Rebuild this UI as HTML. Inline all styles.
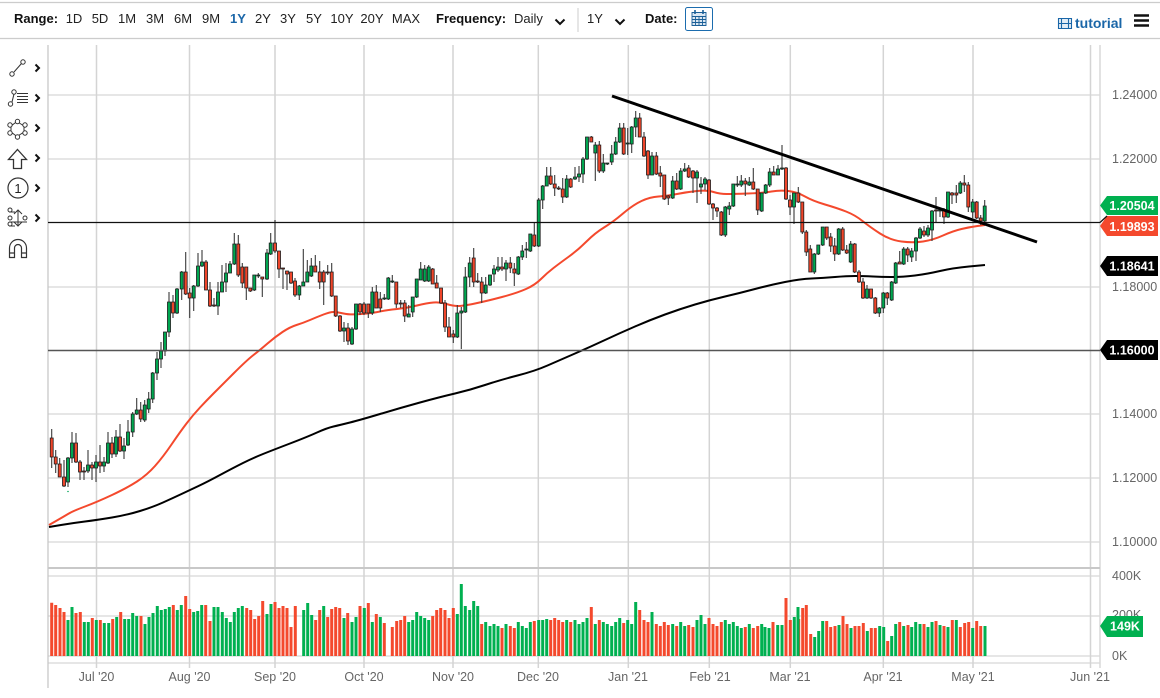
<!DOCTYPE html>
<html lang="en"><head><meta charset="utf-8"><title>Chart</title>
<style>
html,body{margin:0;padding:0;background:#fff}
svg{display:block;filter:blur(.3px)}
text{font-family:"Liberation Sans",sans-serif}
.t{font-size:13px;fill:#222;text-anchor:middle}
.b{font-size:13px;font-weight:bold;fill:#111}
.ax{font-size:12.5px;fill:#666}
.xl{font-size:12.5px;fill:#666;text-anchor:middle}
.lb{font-size:12.5px;font-weight:bold;fill:#fff;text-anchor:middle}
</style></head><body>
<svg width="1160" height="698" viewBox="0 0 1160 698" xmlns="http://www.w3.org/2000/svg">
<!-- toolbar -->
<path d="M0 2.5H1160M0 38.5H1160" stroke="#ccc" stroke-width="1.2" fill="none"/>
<text x="14" y="23" class="b">Range:</text>
<text x="74" y="23" class="t">1D</text><text x="100" y="23" class="t">5D</text><text x="127" y="23" class="t">1M</text><text x="155" y="23" class="t">3M</text><text x="183" y="23" class="t">6M</text><text x="211" y="23" class="t">9M</text>
<text x="238" y="23" class="t" style="font-weight:bold;fill:#1a66a8">1Y</text>
<text x="263" y="23" class="t">2Y</text><text x="288" y="23" class="t">3Y</text><text x="314" y="23" class="t">5Y</text><text x="342" y="23" class="t">10Y</text><text x="372" y="23" class="t">20Y</text><text x="406" y="23" class="t">MAX</text>
<text x="436" y="23" class="b">Frequency:</text>
<text x="514" y="23" style="font-size:13px;fill:#222">Daily</text>
<path d="M555.5 19.5l4.5 4.5 4.5-4.5M615.5 19.5l4.5 4.5 4.5-4.5" stroke="#111" stroke-width="2" fill="none"/>
<path d="M578 8V32" stroke="#ccc"/>
<text x="595" y="23" class="t">1Y</text>
<text x="645" y="23" class="b">Date:</text>
<rect x="685.5" y="7.5" width="27" height="23" rx="2" fill="#fff" stroke="#1b6cae"/>
<path d="M692 12.5h14v13h-14zM692 16.5h14M695.5 16.5v9M699 16.5v9M702.5 16.5v9M692 19.5h14M692 22.5h14" fill="#dbe7f2" stroke="#1b5f97" stroke-width=".9"/>
<path d="M695 10v4M703 10v4" stroke="#1b5f97" stroke-width="1.6"/>
<path d="M1058.5 18.5h13v10h-13zM1061.5 18.5v10M1068.5 18.5v10M1058.5 23.5h13" fill="#e3edf6" stroke="#1a66a8" stroke-width="1.1"/>
<text x="1075" y="28" style="font-size:14px;font-weight:bold;fill:#1a66a8">tutorial</text>
<path d="M1134 15.5h15M1134 20.5h15M1134 25.5h15" stroke="#111" stroke-width="2.6"/>

<!-- left tools -->
<g fill="none" stroke="#333" stroke-width="1">
<path d="M14 72L21.5 63.5"/><circle cx="12" cy="74" r="2.2"/><circle cx="23" cy="62" r="2.2"/>
<path d="M12 102L14 94"/><circle cx="14" cy="92" r="2.2"/><circle cx="10.5" cy="104" r="2.2"/>
<path d="M17 93.5H28M17 96.5H28M17 99.5H28M17 102.5H28"/>
<path d="M17 121.5L24 126L24 132L17 136.5L11 132L11 126Z"/><circle cx="17.5" cy="121.5" r="2.2" fill="#fff"/><circle cx="25" cy="125" r="2.2" fill="#fff"/><circle cx="25" cy="133" r="2.2" fill="#fff"/><circle cx="17.5" cy="137" r="2.2" fill="#fff"/><circle cx="10" cy="133" r="2.2" fill="#fff"/><circle cx="10" cy="125" r="2.2" fill="#fff"/>
<path d="M17.5 149.5L26.5 159.5H21.5V168.5H13.5V159.5H8.5Z" stroke-width="1.3"/>
<circle cx="18" cy="188" r="10" stroke-width="1.2"/>
<path d="M9 212H15M9 222H27M9 226H15M18 210V226M14 214l4-4 4 4M14 222l4 4 4-4"/><circle cx="10" cy="210" r="2"/><circle cx="10" cy="218" r="2"/><circle cx="10" cy="224" r="2"/><circle cx="25" cy="218" r="2"/>
<path d="M9.5 257.5V248a8.5 8.5 0 0 1 17 0v9.5h-5V248a3.5 3.5 0 0 0-7 0v9.5ZM9.5 253h5M21.5 253h5" stroke-width="1.2"/>
</g>
<text x="18" y="193" style="font-size:13px;fill:#222;text-anchor:middle">1</text>
<path d="M35.5 64.5l3.5 3.5-3.5 3.5M35.5 94.5l3.5 3.5-3.5 3.5M35.5 124.5l3.5 3.5-3.5 3.5M35.5 154.5l3.5 3.5-3.5 3.5M35.5 184.5l3.5 3.5-3.5 3.5M35.5 214.5l3.5 3.5-3.5 3.5" stroke="#111" stroke-width="2" fill="none"/>

<!-- grid -->
<path d="M48 95H1100M48 159H1100M48 287H1100M48 414H1100M48 478H1100M48 542H1100M48 576H1100M48 616H1100M48 656H1100M48 663H1100" stroke="#e6e6e6" stroke-width="2" fill="none"/>
<path d="M96.5 45V668M189.5 45V668M275 45V668M364 45V668M453 45V668M538.3 45V668M628.3 45V668M709.3 45V668M790.3 45V668M883.3 45V668M973 45V668M1090.5 45V668" stroke="#d4d4d4" stroke-width="1.5" fill="none"/>
<path d="M48 45V688" stroke="#c8c8c8" stroke-width="1.3"/>
<path d="M1100 45V668" stroke="#d8d8d8" stroke-width="1.5"/>
<path d="M48 568H1100" stroke="#c8c8c8" stroke-width="2"/>

<!-- MAs -->
<path d="M49 525L56 521Q63 517 68 514Q73 511 85 506.5Q97 502 112 495Q127 488 137 481.5Q147 475 155 466Q163 457 171.5 444.5Q180 432 186.5 423.5Q193 415 200 407.5Q207 400 213.5 393.5Q220 387 233.5 373.5Q247 360 253.5 355Q260 350 267.5 343.5Q275 337 282.5 332Q290 327 296.5 325Q303 323 310 320Q317 317 323.5 314.5Q330 312 333.5 312Q337 312 343.5 313.5Q350 315 361.5 314Q373 313 380 311.5Q387 310 397 309Q407 308 417 305.5Q427 303 433.5 302.5Q440 302 446.5 304Q453 306 458 306Q463 306 475 303.5Q487 301 502 297Q517 293 526 289Q535 285 541 279Q547 273 553.5 268Q560 263 569 256.5Q578 250 586.5 241.5Q595 233 604 227.5Q613 222 623 213.5Q633 205 641.5 201Q650 197 658.5 196.5Q667 196 677 194Q687 192 697 191Q707 190 713.5 192Q720 194 726.5 194Q733 194 748 193.5Q763 193 771.5 191.5Q780 190 788.5 191Q797 192 805 196.5Q813 201 825 204.5Q837 208 846 211.5Q855 215 862.5 221Q870 227 880 233.5Q890 240 901.5 241.5Q913 243 923 241.5Q933 240 943 235.5Q953 231 961.5 229Q970 227 977.5 226L985 225" fill="none" stroke="#f4492d" stroke-width="2" stroke-linejoin="round"/>
<path d="M49 527L61 525Q73 523 85 521.5Q97 520 112 517.5Q127 515 140 511Q153 507 163 502.5Q173 498 181.5 494Q190 490 198.5 486Q207 482 220 475Q233 468 243 463Q253 458 263 454Q273 450 290 443.5Q307 437 317 432.5Q327 428 333.5 426.5Q340 425 350 422.5Q360 420 380 414Q400 408 420 402.5Q440 397 455 393.5Q470 390 485 385Q500 380 517.5 375.5Q535 371 547.5 365.5Q560 360 575 353.5Q590 347 605 340Q620 333 635 326.5Q650 320 665 314.5Q680 309 695 304.5Q710 300 725 296.5Q740 293 755 289Q770 285 785 282Q800 279 811.5 278.5Q823 278 835 277Q847 276 855 276Q863 276 873 276.5Q883 277 893 277Q903 277 915 275.5Q927 274 940 271Q953 268 969 266.5L985 265" fill="none" stroke="#000" stroke-width="2" stroke-linejoin="round"/>

<!-- wicks -->
<path fill="none" stroke="#3a3a3a" stroke-width="1.1" d="M51.7 429V468M55.7 450V473M59.7 458V477M64 460V487M68 457V487M72 432V463M76 433V463M80 460V480M84 467V480M88 450V473M92 462V480M96 455V482M100 445V473M104 457V472M108 432V464M112 437V458M116 430V457M120 424V452M124 438V459M128 420V446M132.7 412V437M136.7 398V415M140.7 402V422M144.7 400V422M148.7 392V413M152.7 372V403M157 352V380M161 342V368M165 332V356M169 292V337M173 295V318M177 288V314M181.7 271V300M185.7 252V295M189.7 288V318M193.7 285V311M198 253V287M202 250V267M206 260V290M210 282V307M214 298V307M218 282V315M222 265V292M226 263V292M230 261V273M234.3 233V265M238.3 235V277M242.3 263V288M246.3 267V300M250.3 288V292M254.3 275V291M258.3 273V278M262.3 277V297M267 249V280M270.7 233V255M275 220V253M279 251V278M283 268V289M287 271V290M291 272V284M295 278V297M299.3 285V300M303.3 249V286M307.3 260V282M311.3 258V277M315.3 255V272M319.7 261V289M323.7 270V305M327.7 265V275M331.7 263V297M335.7 296V317M340 315V332M344 322V342M348 323V345M352 327V345M356 304V330M360 303V315M364 302V315M368.3 304V318M372.3 287V315M376.3 285V308M380.3 292V312M384.3 294V300M388.3 277V300M392.3 275V283M396.3 282V308M400.7 300V308M404.7 300V322M408.7 305V317M412.7 297V317M416.7 279V298M420.7 262V280M424.7 265V282M428.7 265V282M432.7 268V284M436.7 275V288M441 288V304M445 300V332M449 317V337M453.3 330V343M457.3 305V338M461.3 307V349M465.3 267V313M469.7 257V287M473.7 248V287M477.7 273V283M481.7 277V303M485.7 277V294M490 275V286M494 265V282M498 257V272M502 257V271M506 260V281M510.3 257V273M514.3 263V286M518.3 256V275M522.3 245V260M526.3 242V258M530.3 234V252M534.3 222V247M538.7 198V247M542.7 185V209M546.7 167V186M550.7 167V185M554.7 175V196M558.7 186V190M562.7 178V203M566.7 175V198M570.7 178V188M575 167V180M579 166V182M583 157V183M587 137V160M591.3 136V142M595.3 142V181M599.3 141V173M603.3 154V173M607.3 163V165M611.7 145V165M615.7 137V155M619.7 123V143M623.7 123V155M627.7 128V155M631.7 126V153M635.7 111V137M639.7 113V137M644 132V157M648 150V179M652 152V175M656.3 152V175M660.3 166V187M664.3 175V200M668.3 195V205M672.7 176V199M676.7 173V190M680.7 168V190M684.7 163V172M688.7 165V178M693 170V193M697 170V203M701 177V194M705 177V190M709 179V205M713 203V220M717 207V217M721.3 211V236M725.3 206V237M729.3 202V215M733.3 184V207M737.3 176V187M741.3 175V187M745.3 178V196M749.3 177V186M753.3 168V190M757.7 189V215M761.7 193V212M765.7 184V194M769.7 168V187M773.7 166V175M778 165V175M782 145V170M786 167V200M790 195V215M794 193V224M798.3 187V203M802.3 202V234M806.3 230V256M810.3 245V272M814.3 253V274M818.3 245V255M822.7 227V246M826.7 227V240M830.7 233V252M834.7 238V261M838.7 228V255M842.7 227V251M846.7 245V254M850.7 241V263M854.7 243V273M859 270V283M863 278V299M867 285V299M871 289V299M875.3 297V314M879.3 307V317M883.3 292V313M887.3 292V305M891.7 281V301M895.7 262V284M899.7 251V264M903.7 247V265M907.7 247V262M911.7 248V262M916 237V261M920 227V239M924 226V237M928 225V237M932 210V241M936 197V222M940 208V217M944 208V224M948 192V218M952 192V204M956.3 185V203M960.3 181V194M964.3 175V192M968.3 182V212M972.7 199V218M976.7 201V219M980.7 215V225M984.7 200V223"/>
<!-- red bodies -->
<path fill="#ef452a" stroke="#1a1a1a" stroke-width=".8" d="M50.2 438h3v19h-3zM54.2 457h3v7h-3zM58.2 464h3v13h-3zM62.5 477h3v9h-3zM74.5 443h3v19h-3zM78.5 462h3v10h-3zM82.5 471h3v1h-3zM90.5 465h3v3h-3zM98.5 462h3v4h-3zM110.5 443h3v11h-3zM118.5 437h3v14h-3zM139.2 410h3v9h-3zM171.5 302h3v11h-3zM184.2 272h3v22h-3zM188.2 293h3v5h-3zM204.5 262h3v28h-3zM208.5 290h3v16h-3zM212.5 305h3v1h-3zM236.8 244h3v31h-3zM240.8 267h3v16h-3zM244.8 267h3v21h-3zM248.8 288h3v3h-3zM260.8 277h3v2h-3zM273.5 243h3v8h-3zM277.5 251h3v18h-3zM281.5 268h3v1h-3zM285.5 271h3v3h-3zM289.5 272h3v11h-3zM293.5 281h3v14h-3zM313.8 266h3v6h-3zM318.2 272h3v10h-3zM322.2 272h3v10h-3zM326.2 272h3v1h-3zM330.2 272h3v24h-3zM334.2 296h3v20h-3zM338.5 316h3v15h-3zM346.5 328h3v13h-3zM358.5 304h3v8h-3zM362.5 304h3v9h-3zM366.8 304h3v9h-3zM374.8 292h3v16h-3zM378.8 299h3v9h-3zM394.8 282h3v22h-3zM399.2 303h3v1h-3zM403.2 303h3v13h-3zM431.2 269h3v15h-3zM435.2 283h3v5h-3zM439.5 288h3v15h-3zM443.5 303h3v24h-3zM447.5 327h3v10h-3zM451.8 334h3v3h-3zM472.2 258h3v24h-3zM476.2 281h3v1h-3zM480.2 282h3v11h-3zM500.5 267h3v2h-3zM508.8 263h3v5h-3zM512.8 269h3v4h-3zM532.8 235h3v11h-3zM549.2 176h3v8h-3zM553.2 184h3v4h-3zM557.2 188h3v1h-3zM561.2 189h3v8h-3zM569.2 179h3v8h-3zM589.8 137h3v5h-3zM597.8 145h3v26h-3zM622.2 128h3v26h-3zM638.2 118h3v19h-3zM642.5 137h3v19h-3zM646.5 151h3v24h-3zM654.8 156h3v18h-3zM658.8 173h3v3h-3zM662.8 175h3v24h-3zM666.8 196h3v2h-3zM675.2 181h3v8h-3zM687.2 168h3v9h-3zM691.5 171h3v7h-3zM707.5 180h3v24h-3zM711.5 204h3v4h-3zM715.5 208h3v3h-3zM719.8 212h3v23h-3zM743.8 181h3v3h-3zM751.8 182h3v7h-3zM756.2 189h3v21h-3zM772.2 172h3v3h-3zM784.5 168h3v31h-3zM788.5 200h3v7h-3zM796.8 193h3v9h-3zM800.8 202h3v30h-3zM804.8 232h3v20h-3zM808.8 249h3v23h-3zM825.2 227h3v11h-3zM829.2 237h3v9h-3zM833.2 246h3v8h-3zM841.2 229h3v21h-3zM845.2 250h3v3h-3zM853.2 244h3v28h-3zM857.5 272h3v10h-3zM861.5 282h3v16h-3zM869.5 289h3v9h-3zM873.8 298h3v15h-3zM885.8 293h3v5h-3zM898.2 262h3v2h-3zM906.2 249h3v6h-3zM922.5 231h3v4h-3zM934.5 210h3v1h-3zM942.5 210h3v7h-3zM950.5 193h3v2h-3zM954.8 193h3v2h-3zM962.8 183h3v2h-3zM966.8 185h3v22h-3zM975.2 202h3v16h-3zM979.2 218h3v3h-3z"/>
<!-- green bodies -->
<path fill="#00a650" stroke="#1a1a1a" stroke-width=".8" d="M66.5 458h3v24h-3zM70.5 443h3v15h-3zM86.5 465h3v6h-3zM94.5 462h3v6h-3zM102.5 462h3v4h-3zM106.5 443h3v20h-3zM114.5 437h3v17h-3zM122.5 446h3v5h-3zM126.5 432h3v13h-3zM131.2 414h3v18h-3zM135.2 410h3v4h-3zM143.2 405h3v15h-3zM147.2 399h3v10h-3zM151.2 373h3v26h-3zM155.5 359h3v14h-3zM159.5 351h3v8h-3zM163.5 332h3v19h-3zM167.5 302h3v30h-3zM175.5 289h3v24h-3zM180.2 272h3v17h-3zM192.2 286h3v12h-3zM196.5 266h3v20h-3zM200.5 262h3v4h-3zM216.5 292h3v14h-3zM220.5 282h3v10h-3zM224.5 273h3v9h-3zM228.5 264h3v9h-3zM232.8 244h3v20h-3zM252.8 275h3v15h-3zM256.8 275h3v1h-3zM265.5 253h3v26h-3zM269.2 243h3v11h-3zM297.8 286h3v9h-3zM301.8 282h3v4h-3zM305.8 272h3v10h-3zM309.8 266h3v10h-3zM342.5 328h3v3h-3zM350.5 329h3v15h-3zM354.5 304h3v25h-3zM370.8 292h3v21h-3zM382.8 298h3v1h-3zM386.8 278h3v21h-3zM390.8 281h3v1h-3zM407.2 314h3v3h-3zM411.2 297h3v15h-3zM415.2 279h3v18h-3zM419.2 269h3v11h-3zM423.2 269h3v12h-3zM427.2 267h3v14h-3zM455.8 313h3v24h-3zM459.8 311h3v2h-3zM463.8 277h3v35h-3zM468.2 263h3v14h-3zM484.2 285h3v8h-3zM488.5 275h3v10h-3zM492.5 269h3v5h-3zM496.5 267h3v3h-3zM504.5 263h3v6h-3zM516.8 257h3v17h-3zM520.8 251h3v6h-3zM524.8 249h3v1h-3zM528.8 234h3v17h-3zM537.2 200h3v46h-3zM541.2 186h3v14h-3zM545.2 176h3v10h-3zM565.2 179h3v18h-3zM573.5 177h3v2h-3zM577.5 174h3v3h-3zM581.5 159h3v15h-3zM585.5 137h3v22h-3zM593.8 145h3v8h-3zM601.8 163h3v8h-3zM605.8 163h3v1h-3zM610.2 154h3v8h-3zM614.2 142h3v12h-3zM618.2 128h3v14h-3zM626.2 143h3v1h-3zM630.2 127h3v17h-3zM634.2 118h3v9h-3zM650.5 156h3v19h-3zM671.2 181h3v17h-3zM679.2 171h3v18h-3zM683.2 169h3v2h-3zM695.5 172h3v6h-3zM699.5 184h3v3h-3zM703.5 179h3v5h-3zM723.8 207h3v28h-3zM727.8 206h3v3h-3zM731.8 184h3v22h-3zM735.8 184h3v1h-3zM739.8 181h3v4h-3zM747.8 182h3v3h-3zM760.2 193h3v18h-3zM764.2 185h3v8h-3zM768.2 172h3v13h-3zM776.5 169h3v6h-3zM780.5 168h3v1h-3zM792.5 193h3v14h-3zM812.8 254h3v18h-3zM816.8 245h3v9h-3zM821.2 227h3v18h-3zM837.2 229h3v25h-3zM849.2 244h3v18h-3zM865.5 289h3v9h-3zM877.8 308h3v5h-3zM881.8 293h3v15h-3zM890.2 282h3v18h-3zM894.2 263h3v20h-3zM902.2 249h3v15h-3zM910.2 251h3v6h-3zM914.5 238h3v13h-3zM918.5 229h3v9h-3zM926.5 228h3v7h-3zM930.5 211h3v19h-3zM938.5 210h3v1h-3zM946.5 192h3v25h-3zM958.8 183h3v10h-3zM971.2 202h3v10h-3zM983.2 206h3v15h-3z"/>
<path d="M67 491.5h2" stroke="#4fc08a" stroke-width="1.2"/>

<!-- horizontal lines & trend -->
<path d="M48 222.5H1100" stroke="#111" stroke-width="1.2"/>
<path d="M48 350.5H1100" stroke="#555" stroke-width="1.5"/>
<path d="M612 96L1037 242" stroke="#000" stroke-width="3"/>

<!-- volume -->
<path fill="none" stroke="#f4492d" stroke-width="3" d="M51.7 602.7V656M55.7 605V656M60 608V656M64 612V656M76 613V656M80.3 612V656M92.3 618V656M100.3 620V656M112.7 619V656M120.7 612V656M141 616V656M173.3 605V656M185.7 596V656M189.7 609V656M205.7 605V656M210 621V656M246.7 608V656M250.7 610V656M254.7 619V656M258.7 616V656M262.7 601V656M275 602V656M279 608V656M283 606V656M287 608V656M291 627V656M295.3 606V656M315.7 620V656M319.7 610V656M327.7 617V656M331.7 609V656M335.7 607V656M339.7 608V656M347.7 613V656M360 606V656M368.3 603V656M376.3 614V656M384.3 623V656M392.3 627V656M396.7 621V656M400.7 620V656M404.7 616V656M432.7 616V656M436.7 610V656M440.7 608V656M445 610V656M449 618V656M453.3 608V656M481.7 624V656M502 628V656M510.3 626V656M514.3 628V656M534.3 621V656M550.7 620V656M554.7 618V656M558.7 620V656M562.7 622V656M570.7 622V656M591.3 607V656M599.3 620V656M623.7 623V656M639.7 610V656M644 620V656M648 622V656M656.3 624V656M660.3 626V656M664.3 622V656M668.3 625V656M676.7 626V656M688.7 625V656M693 627V656M709 618V656M713 624V656M717 626V656M721.3 622V656M745.3 627V656M753.3 628V656M757.7 626V656M773 622V656M786 598V656M790.3 620V656M798.7 619V656M802.7 608V656M806.3 605V656M810.7 634V656M826.7 621V656M830.7 627V656M835 626V656M843 616V656M847 624V656M855 626V656M859 626V656M863.3 623V656M871.3 628V656M875.3 628V656M887.7 641V656M899.7 622V656M908 625V656M924 624V656M936 621V656M944 626V656M952.3 620V656M960.3 627V656M964.7 623V656M968.7 622V656M976.7 621V656M980.7 626V656"/>
<path fill="none" stroke="#00b050" stroke-width="3" d="M68 620V656M72 607V656M84.3 622V656M88.3 622V656M96.3 620V656M104.3 623V656M108.7 623V656M116.7 617V656M124.7 619V656M128.7 619V656M132.7 613V656M136.7 616V656M145 624V656M149 617V656M153 613V656M157.3 606V656M161.3 610V656M165.3 609V656M169.3 607V656M177.3 610V656M181.3 605V656M193.7 612V656M197.7 611V656M201.7 605V656M214 607V656M218 607V656M222.3 612V656M226.3 618V656M230.3 622V656M234.3 612V656M238.3 608V656M242.3 606V656M267 614V656M271 604V656M303.7 610V656M307.7 603V656M311.7 615V656M323.7 606V656M344 618V656M352 622V656M356 617V656M364.3 608V656M372.3 622V656M380.3 617V656M408.7 622V656M412.7 620V656M416.7 612V656M420.7 616V656M424.7 618V656M428.7 620V656M457.3 614V656M461.3 584V656M465.3 606V656M469.7 610V656M473.7 601V656M477.7 606V656M485.7 622V656M490 626V656M494 624V656M498 626V656M506 624V656M518.3 622V656M522.3 626V656M526.3 628V656M530.3 622V656M538.7 620V656M542.7 620V656M546.7 619V656M566.7 620V656M575 620V656M579 624V656M583 622V656M587 618V656M595.3 624V656M603.3 622V656M607.3 624V656M611.7 626V656M615.7 622V656M619.7 618V656M627.7 620V656M631.7 624V656M635.7 602V656M652 612V656M672.7 624V656M680.7 622V656M684.7 626V656M697 620V656M701 615V656M705 624V656M725.3 620V656M729.3 624V656M733.3 622V656M737.3 626V656M741.3 628V656M749.3 624V656M761.7 624V656M765 627V656M769 628V656M777.7 625V656M782 625V656M794.3 617V656M798 607V656M814.7 637V656M818.7 631V656M822.7 621V656M839 625V656M851 628V656M867.3 631V656M879.7 626V656M883.7 627V656M891.7 636V656M895.7 624V656M903.7 626V656M911.7 627V656M915.7 622V656M920 624V656M928 627V656M932 622V656M940 625V656M948 627V656M956.3 620V656M972.7 628V656M985 626V656"/>

<!-- right axis -->
<text x="1112" y="99" class="ax">1.24000</text>
<text x="1112" y="163" class="ax">1.22000</text>
<text x="1112" y="291" class="ax">1.18000</text>
<text x="1112" y="418" class="ax">1.14000</text>
<text x="1112" y="482" class="ax">1.12000</text>
<text x="1112" y="546" class="ax">1.10000</text>
<text x="1112" y="580" class="ax">400K</text>
<text x="1112" y="619" class="ax">200K</text>
<text x="1112" y="660" class="ax">0K</text>
<path d="M1107 196H1158V215H1107L1100 205.5Z" fill="#00b050"/>
<text x="1132" y="210" class="lb">1.20504</text>
<path d="M1107 216H1158V236H1107L1100 226Z" fill="#f4492d"/>
<text x="1132" y="231" class="lb">1.19893</text>
<path d="M1100 222.5L1107 216" stroke="#111" stroke-width="1.2" fill="none"/>
<path d="M1107 256H1158V276H1107L1100 266Z" fill="#000"/>
<text x="1132" y="270.5" class="lb">1.18641</text>
<path d="M1107 340H1158V360H1107L1100 350Z" fill="#000"/>
<text x="1132" y="354.5" class="lb">1.16000</text>
<path d="M1107 616H1143V637H1107L1100 626Z" fill="#00b050"/>
<text x="1125" y="630.5" class="lb">149K</text>

<!-- x axis -->
<text x="96.5" y="681" class="xl">Jul '20</text>
<text x="189.5" y="681" class="xl">Aug '20</text>
<text x="275" y="681" class="xl">Sep '20</text>
<text x="364" y="681" class="xl">Oct '20</text>
<text x="453" y="681" class="xl">Nov '20</text>
<text x="538" y="681" class="xl">Dec '20</text>
<text x="628" y="681" class="xl">Jan '21</text>
<text x="710" y="681" class="xl">Feb '21</text>
<text x="790" y="681" class="xl">Mar '21</text>
<text x="883" y="681" class="xl">Apr '21</text>
<text x="973" y="681" class="xl">May '21</text>
<text x="1090" y="681" class="xl">Jun '21</text>
</svg>
</body></html>
